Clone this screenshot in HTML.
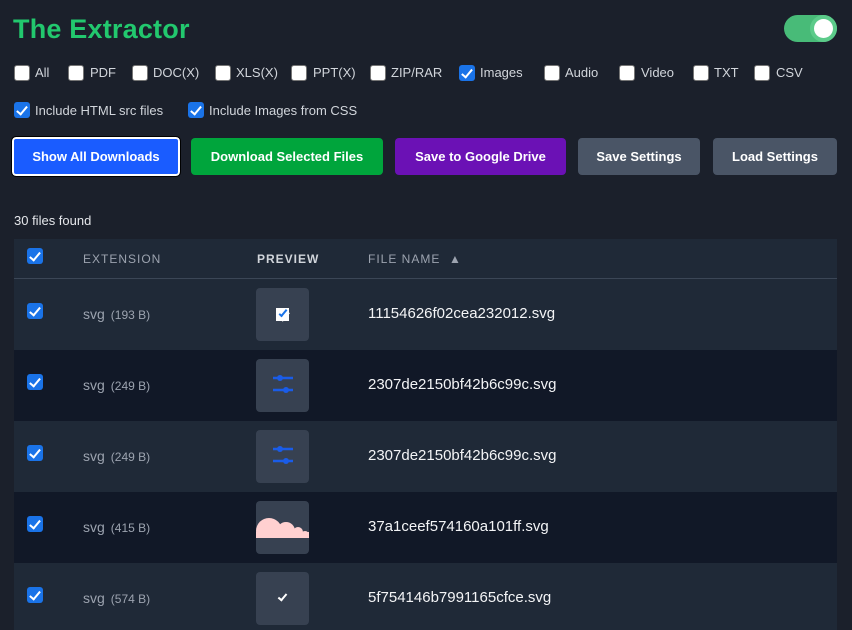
<!DOCTYPE html>
<html><head><meta charset="utf-8"><style>
*{box-sizing:border-box;margin:0;padding:0}
body{width:852px;height:630px;overflow:hidden;background:#1b202b;font-family:"Liberation Sans","Noto Sans CJK SC",sans-serif;color:#e5e7eb;position:relative}
.a{position:absolute}
h1{position:absolute;left:13px;top:14px;font-size:27px;font-weight:bold;color:#22c86e;letter-spacing:0.2px}
.cb{position:absolute;width:16px;height:16px;background:#fff;border:1px solid #767676;border-radius:3px}
.ck{position:absolute;width:16px;height:16px;background:#1a73e8;border-radius:3px}
.ck:after{content:"";position:absolute;left:5px;top:1.5px;width:4px;height:9px;border:solid #fff;border-width:0 2.5px 2.5px 0;transform:rotate(40deg)}
.lb{position:absolute;font-size:13px;color:#d1d5db}
.btn{position:absolute;top:138px;height:37px;border-radius:4px;color:#fff;font-weight:bold;font-size:13px;display:flex;align-items:center;justify-content:center}
.row{position:absolute;left:14px;width:823px;height:71px}
.th{position:absolute;font-size:12px;letter-spacing:1px;color:#9ca3af;top:252px}
.ext{position:absolute;left:83px;font-size:14px;color:#9ca3af}
.ext span{font-size:12px;margin-left:6px}
.pv{position:absolute;left:256px;width:53px;height:53px;background:#374151;border-radius:4px;overflow:hidden}
.fn{position:absolute;left:368px;font-size:15px;color:#f3f4f6}
</style></head><body>
<h1>The Extractor</h1>
<div class="a" style="left:784px;top:15px;width:53px;height:27px;border-radius:14px;background:#48bb78"></div>
<div class="a" style="left:810px;top:15px;width:27px;height:27px;border-radius:14px;background:#5ccb8a"></div>
<div class="a" style="left:814px;top:19px;width:19px;height:19px;border-radius:50%;background:#fff"></div>

<div class="cb" style="left:14px;top:65px"></div><div class="lb" style="left:35px;top:65px">All</div>
<div class="cb" style="left:68px;top:65px"></div><div class="lb" style="left:90px;top:65px">PDF</div>
<div class="cb" style="left:132px;top:65px"></div><div class="lb" style="left:153px;top:65px">DOC(X)</div>
<div class="cb" style="left:215px;top:65px"></div><div class="lb" style="left:236px;top:65px">XLS(X)</div>
<div class="cb" style="left:291px;top:65px"></div><div class="lb" style="left:313px;top:65px">PPT(X)</div>
<div class="cb" style="left:370px;top:65px"></div><div class="lb" style="left:391px;top:65px">ZIP/RAR</div>
<div class="ck" style="left:459px;top:65px"></div><div class="lb" style="left:480px;top:65px">Images</div>
<div class="cb" style="left:544px;top:65px"></div><div class="lb" style="left:565px;top:65px">Audio</div>
<div class="cb" style="left:619px;top:65px"></div><div class="lb" style="left:641px;top:65px">Video</div>
<div class="cb" style="left:693px;top:65px"></div><div class="lb" style="left:714px;top:65px">TXT</div>
<div class="cb" style="left:754px;top:65px"></div><div class="lb" style="left:776px;top:65px">CSV</div>

<div class="ck" style="left:14px;top:102px"></div><div class="lb" style="left:35px;top:103px">Include HTML src files</div>
<div class="ck" style="left:188px;top:102px"></div><div class="lb" style="left:209px;top:103px">Include Images from CSS</div>

<div class="btn" style="left:12px;width:168px;background:#1a5cff;border:2px solid #fff;outline:1px solid #000;top:137px;height:39px">Show All Downloads</div>
<div class="btn" style="left:191px;width:192px;background:#00a53c">Download Selected Files</div>
<div class="btn" style="left:395px;width:171px;background:#6b11b5">Save to Google Drive</div>
<div class="btn" style="left:578px;width:122px;background:#4a5566">Save Settings</div>
<div class="btn" style="left:713px;width:124px;background:#4a5566">Load Settings</div>

<div class="lb" style="left:14px;top:213px;color:#e5e7eb">30 files found</div>

<div class="row" style="top:239px;height:40px;background:#1f2937;border-bottom:1px solid #3b4656"></div>
<div class="ck" style="left:27px;top:248px"></div>
<div class="th" style="left:83px">EXTENSION</div>
<div class="th" style="left:257px;color:#d1d5db;font-weight:bold">PREVIEW</div>
<div class="th" style="left:368px">FILE NAME &nbsp;▲</div>

<div class="row" style="top:279px;background:#1f2937"></div>
<div class="row" style="top:350px;background:#111827"></div>
<div class="row" style="top:421px;background:#1f2937"></div>
<div class="row" style="top:492px;background:#111827"></div>
<div class="row" style="top:563px;background:#1f2937;height:67px"></div>

<div class="ck" style="left:27px;top:303px"></div><div class="ext" style="top:306px">svg<span>(193 B)</span></div>
<div class="pv" style="top:288px"><div class="ck" style="left:20px;top:20px;width:13px;height:13px;background:#fff;border-radius:0"></div><div class="a" style="left:25px;top:20px;width:4px;height:9px;border:solid #1a73e8;border-width:0 2px 2px 0;transform:rotate(40deg)"></div></div>
<div class="fn" style="top:305px">11154626f02cea232012.svg</div>

<div class="ck" style="left:27px;top:374px"></div><div class="ext" style="top:377px">svg<span>(249 B)</span></div>
<div class="pv" style="top:359px"><svg width="53" height="53"><g stroke="#1a5ce8" stroke-width="2.5"><line x1="17" y1="19" x2="37" y2="19"/><line x1="17" y1="31" x2="37" y2="31"/></g><circle cx="24" cy="19" r="3" fill="#1a5ce8"/><circle cx="30" cy="31" r="3" fill="#1a5ce8"/></svg></div>
<div class="fn" style="top:376px">2307de2150bf42b6c99c.svg</div>

<div class="ck" style="left:27px;top:445px"></div><div class="ext" style="top:448px">svg<span>(249 B)</span></div>
<div class="pv" style="top:430px"><svg width="53" height="53"><g stroke="#1a5ce8" stroke-width="2.5"><line x1="17" y1="19" x2="37" y2="19"/><line x1="17" y1="31" x2="37" y2="31"/></g><circle cx="24" cy="19" r="3" fill="#1a5ce8"/><circle cx="30" cy="31" r="3" fill="#1a5ce8"/></svg></div>
<div class="fn" style="top:447px">2307de2150bf42b6c99c.svg</div>

<div class="ck" style="left:27px;top:516px"></div><div class="ext" style="top:519px">svg<span>(415 B)</span></div>
<div class="pv" style="top:501px"><svg width="53" height="53"><clipPath id="c"><rect x="0" y="0" width="53" height="37"/></clipPath><g fill="#ffd0d0" clip-path="url(#c)"><circle cx="13" cy="30" r="13"/><circle cx="30" cy="30" r="9"/><circle cx="42" cy="31" r="5"/><circle cx="49" cy="34" r="4"/><rect x="0" y="31" width="53" height="6"/></g></svg></div>
<div class="fn" style="top:518px">37a1ceef574160a101ff.svg</div>

<div class="ck" style="left:27px;top:587px"></div><div class="ext" style="top:590px">svg<span>(574 B)</span></div>
<div class="pv" style="top:572px"><div class="a" style="left:24px;top:20px;width:5px;height:9px;border:solid #fff;border-width:0 2.5px 2.5px 0;transform:rotate(40deg)"></div></div>
<div class="fn" style="top:589px">5f754146b7991165cfce.svg</div>
</body></html>
